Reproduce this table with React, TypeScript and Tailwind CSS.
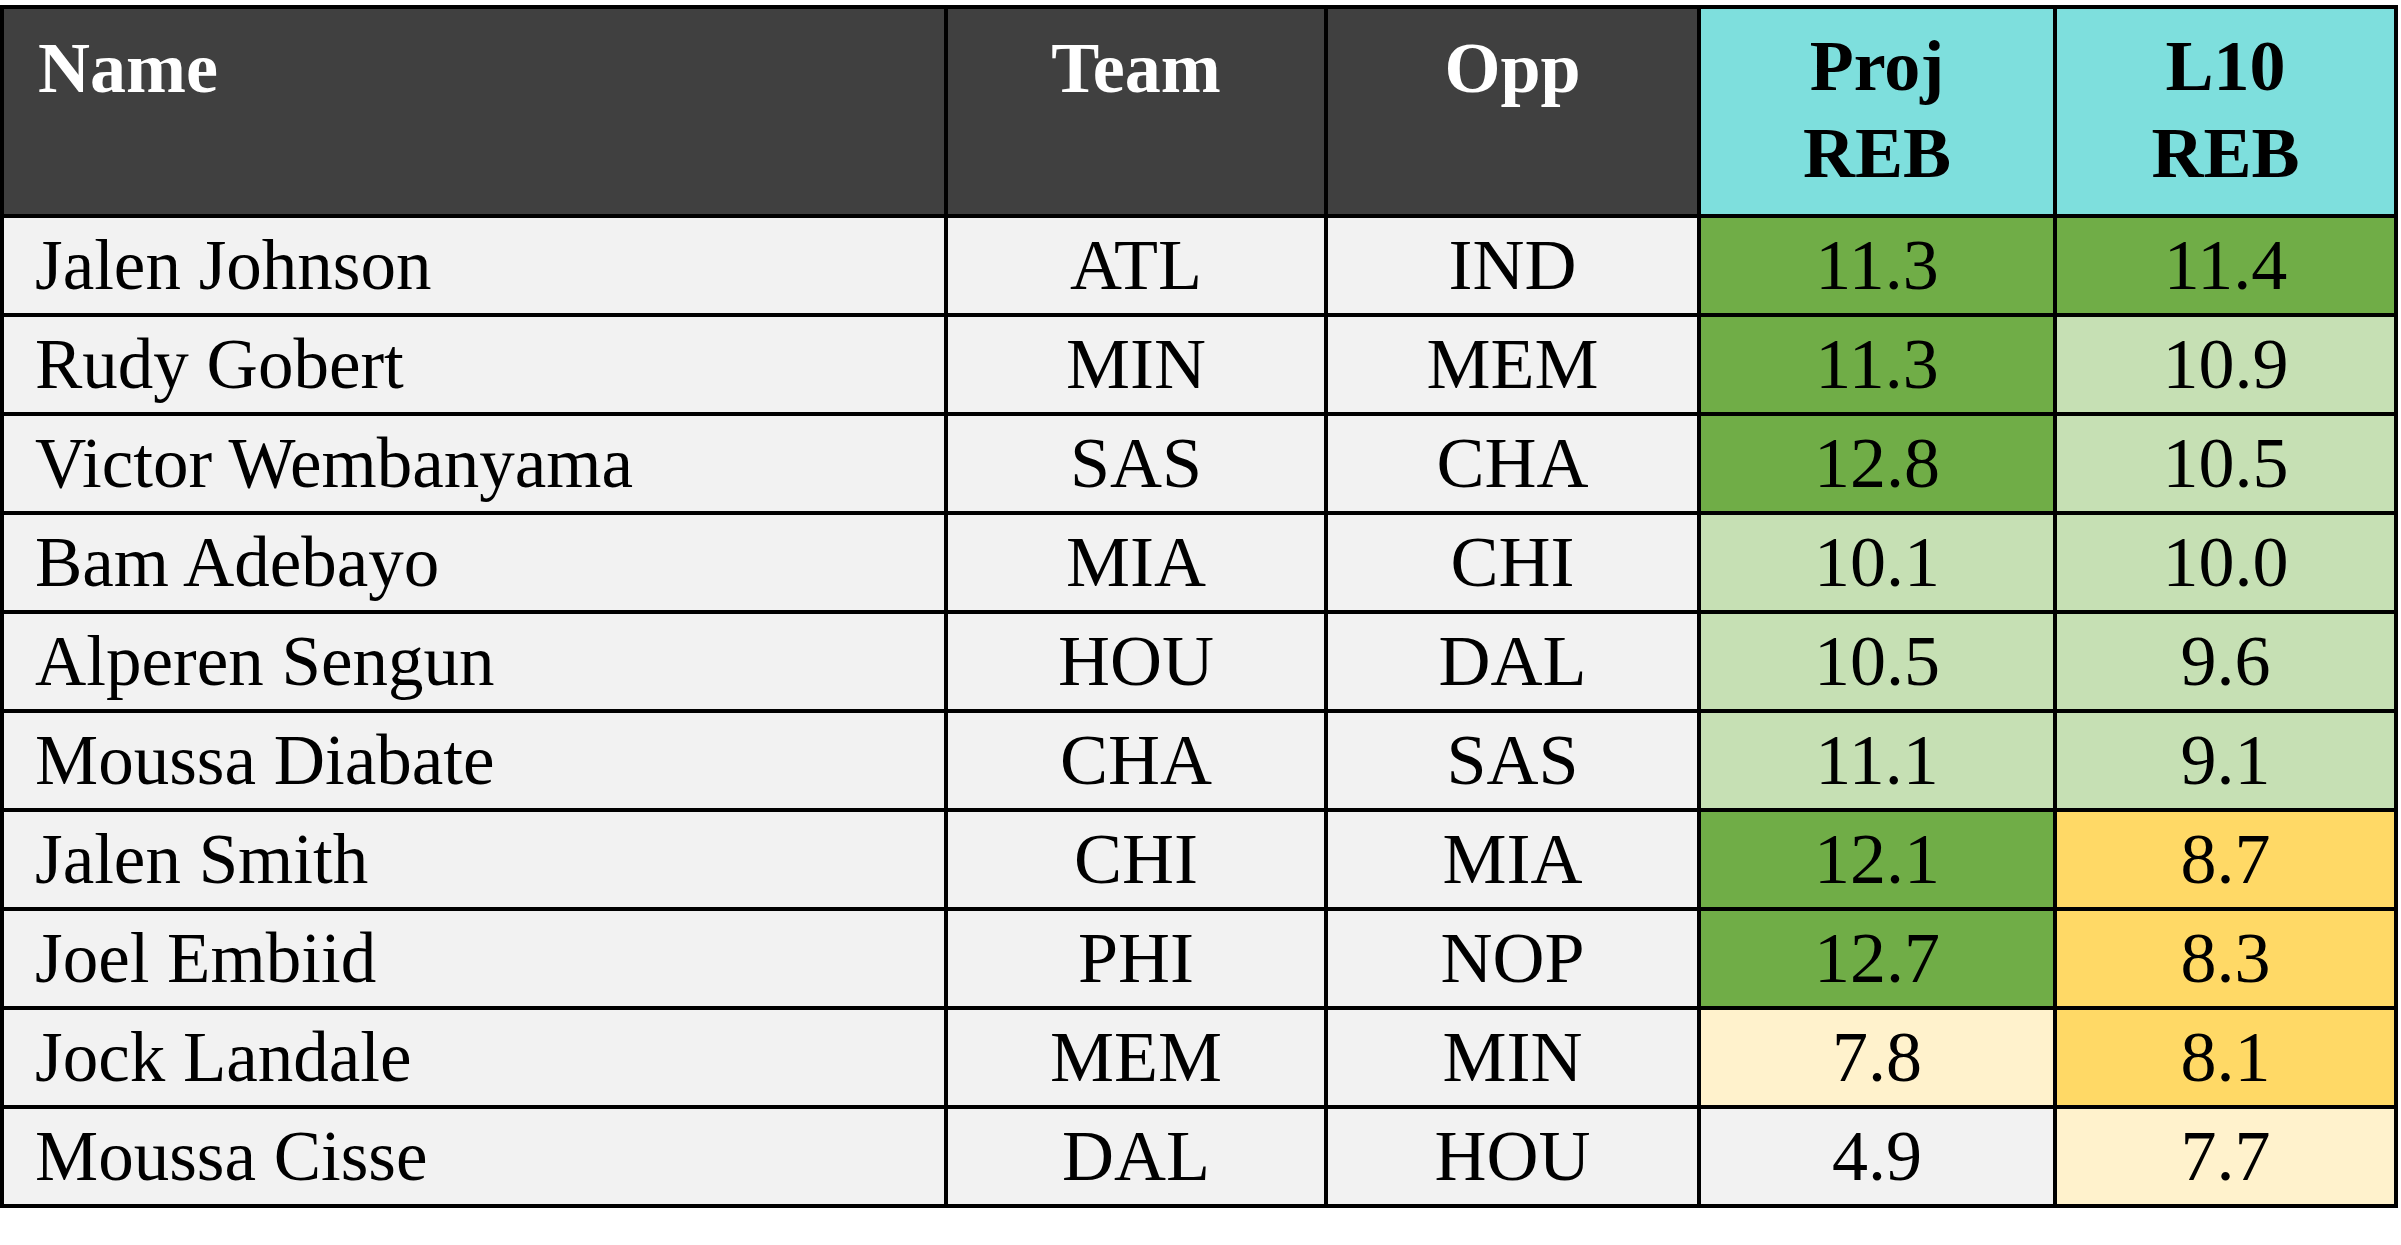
import React from "react";

type Row = {
  name: string;
  team: string;
  opp: string;
  proj: string;
  projBg: string;
  l10: string;
  l10Bg: string;
};

const DG = "bg-[#70ad47]";
const LG = "bg-[#c6e0b4]";
const GOLD = "bg-[#ffd966]";
const LY = "bg-[#fff2cc]";
const GR = "bg-[#f2f2f2]";

const rows: Row[] = [
  { name: "Jalen Johnson", team: "ATL", opp: "IND", proj: "11.3", projBg: DG, l10: "11.4", l10Bg: DG },
  { name: "Rudy Gobert", team: "MIN", opp: "MEM", proj: "11.3", projBg: DG, l10: "10.9", l10Bg: LG },
  { name: "Victor Wembanyama", team: "SAS", opp: "CHA", proj: "12.8", projBg: DG, l10: "10.5", l10Bg: LG },
  { name: "Bam Adebayo", team: "MIA", opp: "CHI", proj: "10.1", projBg: LG, l10: "10.0", l10Bg: LG },
  { name: "Alperen Sengun", team: "HOU", opp: "DAL", proj: "10.5", projBg: LG, l10: "9.6", l10Bg: LG },
  { name: "Moussa Diabate", team: "CHA", opp: "SAS", proj: "11.1", projBg: LG, l10: "9.1", l10Bg: LG },
  { name: "Jalen Smith", team: "CHI", opp: "MIA", proj: "12.1", projBg: DG, l10: "8.7", l10Bg: GOLD },
  { name: "Joel Embiid", team: "PHI", opp: "NOP", proj: "12.7", projBg: DG, l10: "8.3", l10Bg: GOLD },
  { name: "Jock Landale", team: "MEM", opp: "MIN", proj: "7.8", projBg: LY, l10: "8.1", l10Bg: GOLD },
  { name: "Moussa Cisse", team: "DAL", opp: "HOU", proj: "4.9", projBg: GR, l10: "7.7", l10Bg: LY },
];

export default function App() {
  return (
    <div
      className="w-[2401px] h-[1245px] bg-white pt-[5px]"
      style={{ fontFamily: '"Liberation Serif", "Times New Roman", serif' }}
    >
      <div className="grid w-[2398px] grid-cols-[940px_376px_369px_352px_337px] grid-rows-[205px_repeat(10,95px)] gap-[4px] bg-black p-[4px] text-[72px] text-black">
        <div className="bg-[#404040] pl-[34px] pt-[16px] font-bold leading-[87px] text-white">Name</div>
        <div className="bg-[#404040] pt-[16px] text-center font-bold leading-[87px] text-white">Team</div>
        <div className="bg-[#404040] pt-[16px] text-center font-bold leading-[87px] text-white">Opp</div>
        <div className="bg-[#7edfdd] pt-[14px] text-center font-bold leading-[87px]">
          <div>Proj</div>
          <div>REB</div>
        </div>
        <div className="bg-[#7edfdd] pt-[14px] text-center font-bold leading-[87px]">
          <div>L10</div>
          <div>REB</div>
        </div>
        {rows.map((r) => (
          <React.Fragment key={r.name}>
            <div className="bg-[#f2f2f2] pl-[31px] text-[71px] leading-[95px] whitespace-nowrap">{r.name}</div>
            <div className="bg-[#f2f2f2] text-center leading-[95px]">{r.team}</div>
            <div className="bg-[#f2f2f2] text-center leading-[95px]">{r.opp}</div>
            <div className={`${r.projBg} text-center leading-[95px]`}>{r.proj}</div>
            <div className={`${r.l10Bg} text-center leading-[95px]`}>{r.l10}</div>
          </React.Fragment>
        ))}
      </div>
    </div>
  );
}
